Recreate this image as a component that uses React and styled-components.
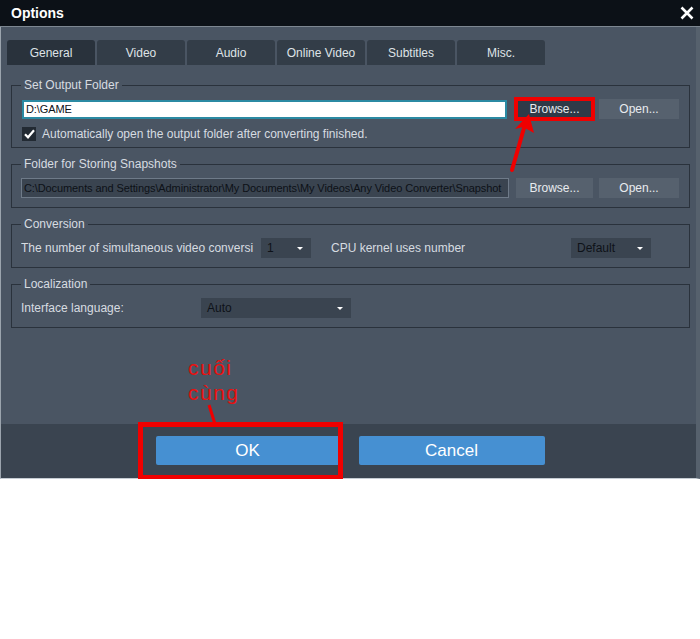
import React from 'react'
import styled, { createGlobalStyle } from 'styled-components'

const Global = createGlobalStyle`
  body {
    margin: 0;
    background: #fff;
    font-family: "Liberation Sans", Arial, sans-serif;
  }
`

const Window = styled.div`
  position: relative;
  width: 700px;
  height: 479px;
  box-sizing: border-box;
  display: flex;
  flex-direction: column;
  background: #4a5563;
  border-left: 1px solid #9ba4ad;
  border-right: 4px solid #56616d;
  border-bottom: 1px solid #c5ccd3;
`

const TitleBar = styled.div`
  height: 26px;
  flex: none;
  display: flex;
  align-items: center;
  justify-content: space-between;
  padding: 0 6px 0 11px;
  background: #0c1117;
  border-bottom: 1px solid #7d8791;
  margin-left: -1px;
  margin-right: -4px;
`

const Title = styled.div`
  color: #fff;
  font-size: 14px;
  font-weight: bold;
`

const Body = styled.div`
  flex: 1;
  padding: 13px 6px 0 6px;
`

const Tabs = styled.div`
  display: flex;
  gap: 2px;
`

const Tab = styled.div`
  width: 88px;
  height: 25px;
  display: flex;
  align-items: center;
  justify-content: center;
  border-radius: 3px 3px 0 0;
  background: ${p => (p.$active ? '#29323c' : '#333d48')};
  color: #dfe3e7;
  font-size: 12px;
`

const Groups = styled.div`
  margin: 13px 0 0 4px;
  display: flex;
  flex-direction: column;
  gap: 9px;
`

const Group = styled.fieldset`
  margin: 0;
  min-width: 0;
  border: 1px solid #2a323c;
  padding: 7px 9px ${p => p.$bottom || 9}px 9px;
`

const Legend = styled.legend`
  margin-left: 0;
  padding: 0 3px;
  color: #d7dce1;
  font-size: 12px;
  line-height: 14px;
`

const Row = styled.div`
  display: flex;
  align-items: center;
  height: 20px;
`

const PathInput = styled.div`
  box-sizing: border-box;
  width: ${p => p.$w}px;
  height: ${p => (p.$light ? 19 : 20)}px;
  margin-left: ${p => p.$ml || 0}px;
  margin-right: ${p => p.$mr || 0}px;
  display: flex;
  align-items: center;
  padding-left: 2px;
  overflow: hidden;
  white-space: nowrap;
  font-size: 11px;
  letter-spacing: -0.1px;
  color: #0d1117;
  background: ${p => (p.$light ? '#fff' : '#3a4450')};
  border: ${p => (p.$light ? '2px solid #2b8aa3' : '1px solid #6e7a88')};
`

const Button = styled.div`
  width: ${p => p.$w}px;
  height: 20px;
  box-sizing: border-box;
  display: flex;
  align-items: center;
  justify-content: center;
  font-size: 12px;
  color: #e8ebee;
  background: ${p => (p.$hot ? '#2f3a48' : '#56616e')};
  outline: ${p => (p.$hot ? '4px solid #f00000' : 'none')};
  outline-offset: -2px;
  & + & {
    margin-left: 6px;
  }
`

const CheckRow = styled.div`
  display: flex;
  align-items: center;
  gap: 6px;
  height: 16px;
  margin: 7px 0 0 1px;
  color: #d7dce1;
  font-size: 12px;
`

const Box = styled.div`
  width: 14px;
  height: 14px;
  display: flex;
  align-items: center;
  justify-content: center;
  background: #222a33;
`

const Label = styled.div`
  width: ${p => p.$w}px;
  margin-left: ${p => p.$ml || 0}px;
  flex: none;
  overflow: hidden;
  white-space: nowrap;
  color: #d7dce1;
  font-size: 12px;
`

const Select = styled.div`
  width: ${p => p.$w}px;
  height: 20px;
  box-sizing: border-box;
  display: flex;
  align-items: center;
  justify-content: space-between;
  padding: 0 8px 0 6px;
  background: #3a4450;
  color: #0e1218;
  font-size: 12px;
`

const Caret = styled.span`
  width: 0;
  height: 0;
  border-left: 3px solid transparent;
  border-right: 3px solid transparent;
  border-top: 3px solid #fff;
`

const Footer = styled.div`
  height: 54px;
  flex: none;
  display: flex;
  justify-content: center;
  align-items: flex-start;
  gap: 19px;
  padding: 12px 0 0 3px;
  box-sizing: border-box;
  background: #3a4450;
`

const BigButton = styled.div`
  width: ${p => p.$w}px;
  height: 29px;
  display: flex;
  align-items: center;
  justify-content: center;
  border-radius: 2px;
  background: #4690d2;
  color: #fff;
  font-size: 17px;
`

const Note = styled.div`
  position: absolute;
  left: 187px;
  top: 355px;
  color: #e81010;
  font-size: 21px;
  line-height: 25px;
  letter-spacing: 1.5px;
`

const Marks = styled.svg`
  position: absolute;
  left: -1px;
  top: 0;
  overflow: visible;
  pointer-events: none;
`

export default function App () {
  const tabs = ['General', 'Video', 'Audio', 'Online Video', 'Subtitles', 'Misc.']
  return (
    <Window>
      <Global />
      <TitleBar>
        <Title>Options</Title>
        <svg width='14' height='14' viewBox='0 0 14 14'>
          <path d='M1.5 1.5L12.5 12.5M12.5 1.5L1.5 12.5' stroke='#fff' strokeWidth='2.6' />
        </svg>
      </TitleBar>
      <Body>
        <Tabs>
          {tabs.map((t, i) => <Tab key={t} $active={i === 0}>{t}</Tab>)}
        </Tabs>
        <Groups>
          <Group $bottom={5}>
            <Legend>Set Output Folder</Legend>
            <Row>
              <PathInput $light $w={485} $ml={1} $mr={9}>D:\GAME</PathInput>
              <Button $w={77} $hot>Browse...</Button>
              <Button $w={80}>Open...</Button>
            </Row>
            <CheckRow>
              <Box>
                <svg width='11' height='10' viewBox='0 0 11 10'>
                  <path d='M1 5.2L4 8.3L10 1.2' fill='none' stroke='#fff' strokeWidth='2.2' />
                </svg>
              </Box>
              Automatically open the output folder after converting finished.
            </CheckRow>
          </Group>
          <Group>
            <Legend>Folder for Storing Snapshots</Legend>
            <Row>
              <PathInput $w={488} $mr={7}>
                C:\Documents and Settings\Administrator\My Documents\My Videos\Any Video Converter\Snapshot
              </PathInput>
              <Button $w={77}>Browse...</Button>
              <Button $w={80}>Open...</Button>
            </Row>
          </Group>
          <Group>
            <Legend>Conversion</Legend>
            <Row>
              <Label $w={240}>The number of simultaneous video conversi</Label>
              <Select $w={50}>1<Caret /></Select>
              <Label $w={240} $ml={20}>CPU kernel uses number</Label>
              <Select $w={80}>Default<Caret /></Select>
            </Row>
          </Group>
          <Group>
            <Legend>Localization</Legend>
            <Row>
              <Label $w={180}>Interface language:</Label>
              <Select $w={150}>Auto<Caret /></Select>
            </Row>
          </Group>
        </Groups>
      </Body>
      <Footer>
        <BigButton $w={184}>OK</BigButton>
        <BigButton $w={186}>Cancel</BigButton>
      </Footer>

      <Note>cuối<br />cùng</Note>
      <Marks width='700' height='480'>
        <rect x='140.5' y='424.5' width='200' height='53' fill='none' stroke='#f00000' strokeWidth='5' />
        <path d='M209 405L215 424' stroke='#f00000' strokeWidth='3' />
        <path d='M512 170L524 128' stroke='#f00000' strokeWidth='4' strokeLinecap='round' />
        <polygon points='529,114 515,129 523,127 534,133' fill='#f00000' />
      </Marks>
    </Window>
  )
}
